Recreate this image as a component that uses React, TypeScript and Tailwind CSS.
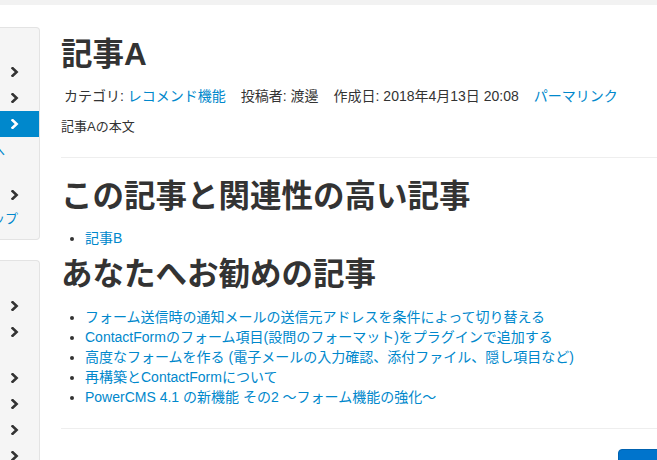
import React from "react";

const Chevron = ({ white = false }: { white?: boolean }) => (
  <svg width="8" height="10" viewBox="0 0 8 10" className="block">
    <polyline
      points="1.6,1.2 5.6,5 1.6,8.8"
      fill="none"
      stroke={white ? "#ffffff" : "#333333"}
      strokeWidth="2.6"
      strokeLinecap="square"
      strokeLinejoin="miter"
    />
  </svg>
);

const Row = ({ active = false, label }: { active?: boolean; label?: React.ReactNode }) => (
  <div
    className={`h-[26px] flex items-center justify-end pr-[20px] ${active ? "bg-[#0088cc]" : ""}`}
  >
    {label}
    <Chevron white={active} />
  </div>
);

const related = ["記事B"];
const recommends = [
  "フォーム送信時の通知メールの送信元アドレスを条件によって切り替える",
  "ContactFormのフォーム項目(設問のフォーマット)をプラグインで追加する",
  "高度なフォームを作る (電子メールの入力確認、添付ファイル、隠し項目など)",
  "再構築とContactFormについて",
  "PowerCMS 4.1 の新機能 その2 ～フォーム機能の強化～",
];

export default function App() {
  return (
    <div
      className="w-[657px] h-[460px] overflow-hidden bg-white text-[#333333]"
      style={{ fontFamily: '"Liberation Sans", "Noto Sans CJK JP", sans-serif' }}
    >
      <div className="h-[5px] bg-[#f2f2f2]" />
      <div className="flex">
        {/* sidebar */}
        <div className="w-[40px] shrink-0 flex flex-col gap-[20px] pt-[22px]">
          <div className="h-[213px] bg-[#f5f5f5] border border-l-0 border-[#e3e3e3] rounded-r-[4px] overflow-hidden">
            <div className="h-[31px]" />
            <Row />
            <Row />
            <Row active />
            <Row
              label={
                <span className="text-[13px] leading-none text-[#0088cc] mr-[14px] whitespace-nowrap">へ</span>
              }
            />
            <div className="h-[19px]" />
            <Row />
            <div className="h-[20px] flex items-center justify-end pr-[21px]">
              <span className="text-[13px] leading-none text-[#0088cc] whitespace-nowrap">ップ</span>
            </div>
          </div>
          <div className="h-[220px] bg-[#f5f5f5] border border-l-0 border-b-0 border-[#e3e3e3] rounded-tr-[4px] overflow-hidden">
            <div className="h-[32px]" />
            <Row />
            <Row />
            <div className="h-[20px]" />
            <Row />
            <Row />
            <Row />
            <Row />
          </div>
        </div>

        {/* main */}
        <div className="ml-[21px] flex-1 min-w-0 pt-[29px]">
          <h1 className="text-[31.5px] leading-[40px] font-bold">記事A</h1>
          <div className="mt-[12px] text-[14px] leading-[20px] pl-[3px] whitespace-nowrap">
            <span>カテゴリ: </span>
            <a className="text-[#0088cc]">レコメンド機能</a>
            <span className="ml-[15px]">投稿者: 渡邊</span>
            <span className="ml-[15px]">作成日: 2018年4月13日 20:08</span>
            <a className="ml-[15px] text-[#0088cc]">パーマリンク</a>
          </div>
          <p className="mt-[11px] text-[13px] leading-[20px]">記事Aの本文</p>
          <div className="mt-[20px] h-px bg-[#eeeeee]" />

          <h2 className="mt-[18px] text-[31.5px] leading-[40px] font-bold whitespace-nowrap">
            この記事と関連性の高い記事
          </h2>
          <ul className="mt-[12px] list-disc pl-[24px] text-[14px] leading-[20px]">
            {related.map((t) => (
              <li key={t}>
                <a className="text-[#0088cc]">{t}</a>
              </li>
            ))}
          </ul>

          <h2 className="mt-[6px] text-[31.5px] leading-[40px] font-bold whitespace-nowrap">
            あなたへお勧めの記事
          </h2>
          <ul className="mt-[13px] list-disc pl-[24px] text-[14px] leading-[20px]">
            {recommends.map((t) => (
              <li key={t} className="whitespace-nowrap">
                <a className="text-[#0088cc]">{t}</a>
              </li>
            ))}
          </ul>
          <div className="mt-[21px] h-px bg-[#eeeeee]" />
          <div className="mt-[20px] flex pl-[557px]">
            <div className="w-[80px] h-[30px] shrink-0 rounded-t-[4px] bg-[#0074cc] border border-[#0062b0]" />
          </div>
        </div>
      </div>
    </div>
  );
}
